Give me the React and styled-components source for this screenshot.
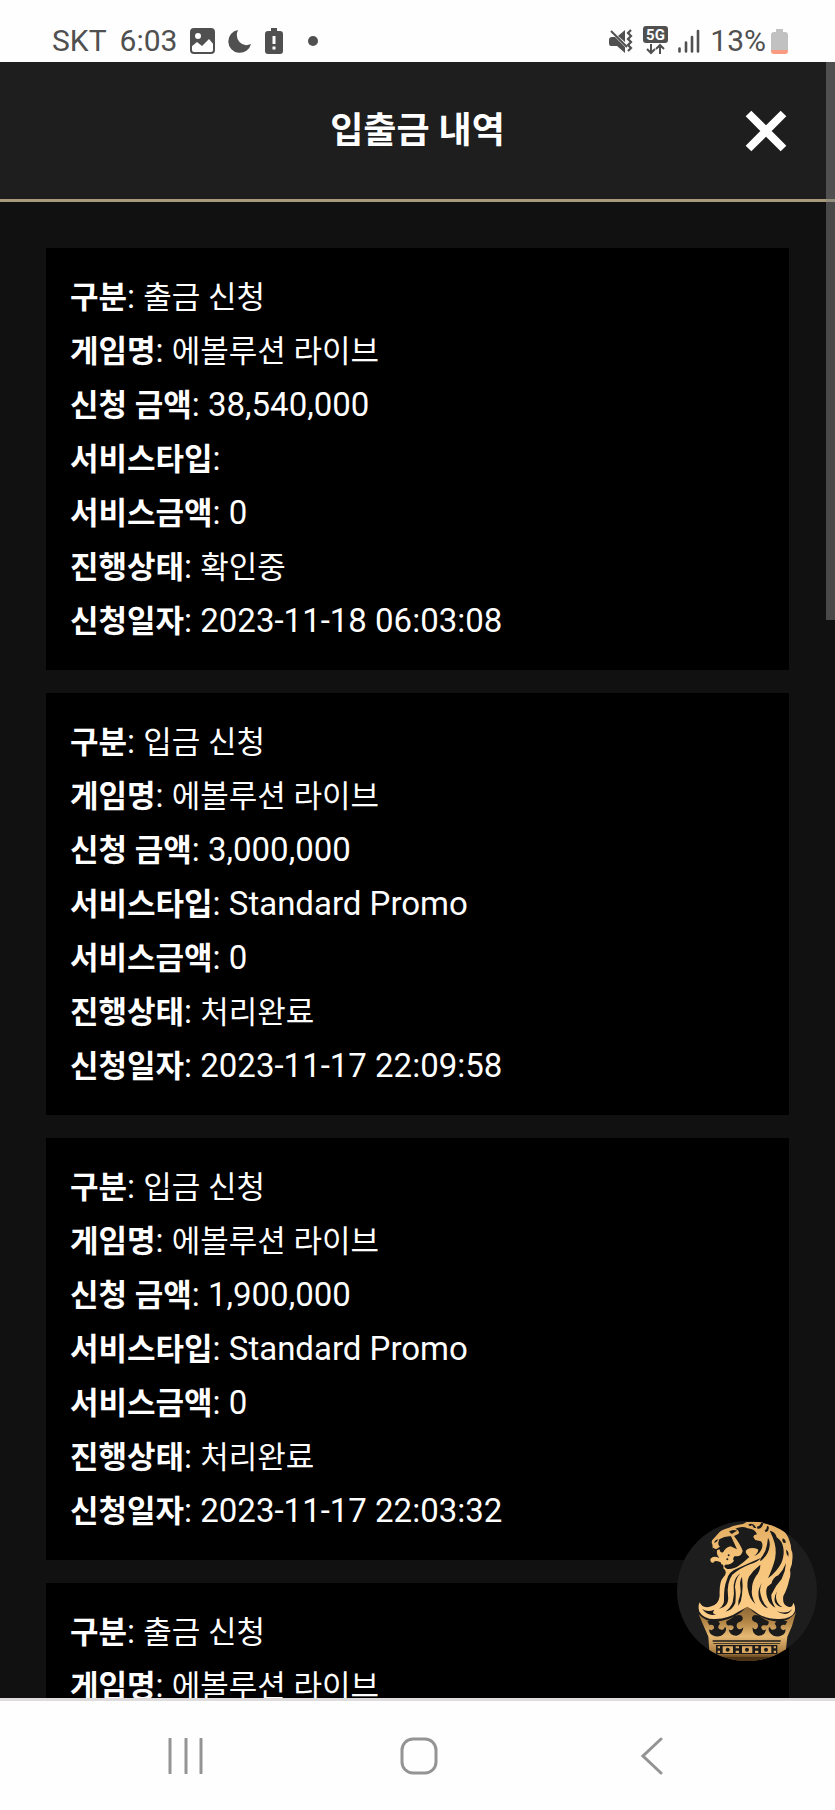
import React from 'react'
import styled, { createGlobalStyle } from 'styled-components'

const GlobalStyle = createGlobalStyle`
* {
  box-sizing: border-box;
}
body {
  margin: 0;
  background: #111;
  font-family: Roboto, "Noto Sans CJK KR", sans-serif;
}
`

const Page = styled.div`
height: 100vh;
display: flex;
flex-direction: column;
overflow: hidden;
`

const StatusBar = styled.div`
flex: none;
display: flex;
justify-content: space-between;
height: 62px;
padding: 20px 47px 0 52px;
background: #fefefe;
color: #505050;
font-size: 30px;
line-height: 42px;
`
const StatusGroup = styled.div`
display: flex;
align-items: center;
gap: ${(props) => props.$gap}px;
`
const Dot = styled.span`
width: 10px;
height: 10px;
margin-left: 12px;
border-radius: 50%;
background: #505050;
`
const Percent = styled.div`
display: flex;
align-items: center;
gap: 5px;
`

const Screen = styled.main`
flex: 1;
min-height: 0;
position: relative;
overflow: hidden;
background: #111;
color: #fff;
`
const Header = styled.header`
display: grid;
grid-template-columns: 1fr auto 1fr;
align-items: center;
height: 140px;
padding: 0 48px;
background: #1e1e1e;
border-bottom: 3px solid #a99a7c;
`
const Title = styled.h1`
grid-column: 2;
margin: 0;
font-size: 36px;
line-height: 48px;
font-weight: 700;
`
const Close = styled.button`
justify-self: end;
display: flex;
padding: 0;
border: none;
background: none;
color: #fff;
cursor: pointer;
`

const List = styled.div`
display: flex;
flex-direction: column;
gap: 23px;
padding: 46px;
`
const Card = styled.section`
padding: 22px 24px;
background: #000;
`
const Row = styled.p`
margin: 0;
height: 54px;
font-size: 33px;
line-height: 54px;
white-space: nowrap;
`
const Label = styled.strong`
font-size: 31px;
font-weight: 700;
`
const Value = styled.span`
font-size: ${(props) => (props.$korean ? '31px' : '33px')};
`

const ScrollThumb = styled.div`
position: absolute;
top: 0;
right: 0;
width: 9px;
height: 558px;
background: rgba(130, 130, 130, 0.5);
`
const Floating = styled.button`
position: absolute;
right: 18px;
bottom: 37px;
display: flex;
width: 140px;
height: 140px;
padding: 0;
border: none;
border-radius: 50%;
overflow: hidden;
background: #1d1d1d;
cursor: pointer;
`

const NavBar = styled.nav`
flex: none;
display: grid;
grid-template-columns: repeat(3, 1fr);
align-items: center;
height: 112px;
padding: 0 66px 0 69px;
background: #fefefe;
border-top: 3px solid #dedcdc;
`
const NavButton = styled.button`
display: flex;
justify-content: center;
padding: 16px 0;
border: none;
background: none;
color: #949494;
`

const records = [
    { kind: '출금 신청', game: '에볼루션 라이브', amount: '38,540,000', type: '', bonus: '0', state: '확인중', date: '2023-11-18 06:03:08' },
    { kind: '입금 신청', game: '에볼루션 라이브', amount: '3,000,000', type: 'Standard Promo', bonus: '0', state: '처리완료', date: '2023-11-17 22:09:58' },
    { kind: '입금 신청', game: '에볼루션 라이브', amount: '1,900,000', type: 'Standard Promo', bonus: '0', state: '처리완료', date: '2023-11-17 22:03:32' },
    { kind: '출금 신청', game: '에볼루션 라이브' },
]

const fields = [
    { key: 'kind', label: '구분', korean: true },
    { key: 'game', label: '게임명', korean: true },
    { key: 'amount', label: '신청 금액' },
    { key: 'type', label: '서비스타입' },
    { key: 'bonus', label: '서비스금액' },
    { key: 'state', label: '진행상태', korean: true },
    { key: 'date', label: '신청일자' },
]

const PictureIcon = () => (
    <svg width="25" height="26" viewBox="0 0 25 26">
        <rect x="1" y="1" width="23" height="24" rx="3" fill="none" stroke="#505050" strokeWidth="2" />
        <path d="M1 3Q1 1 3 1H22Q24 1 24 3V17L19 11L12 18L7 14L1 19Z" fill="#505050" />
        <circle cx="8" cy="8" r="3" fill="#fefefe" />
    </svg>
)

const MoonIcon = () => (
    <svg width="24" height="24" viewBox="0 0 24 24">
        <path d="M10 1A11.5 11.5 0 1 0 23 15Q16 18 11.500 13Q7 8 10 1Z" fill="#505050" />
    </svg>
)

const AlertBatteryIcon = () => (
    <svg width="18" height="26" viewBox="0 0 18 26">
        <path d="M6 0H12V3H15Q18 3 18 6V23Q18 26 15 26H3Q0 26 0 23V6Q0 3 3 3H6Z" fill="#505050" />
        <path d="M7.500 8H10.500V16H7.500ZM7.500 18.500H10.500V21.500H7.500Z" fill="#fefefe" />
    </svg>
)

const MuteIcon = () => (
    <svg width="24" height="24" viewBox="0 0 24 24">
        <path d="M0 11Q0 8 3 8H6L16 18V24L8 17H2Q0 17 0 14ZM9 7L16 1V13Z" fill="#505050" />
        <path d="M2 2L18 18" stroke="#505050" strokeWidth="2" />
        <path d="M22 1L19 4L22 7L19 10L22 13L19 16L22 19L19 22" fill="none" stroke="#505050" strokeWidth="2.200" />
    </svg>
)

const NetworkIcon = () => (
    <svg width="25" height="30" viewBox="0 0 25 30">
        <rect width="25" height="17" rx="3" fill="#505050" />
        <text x="12.500" y="13.500" textAnchor="middle" fontFamily="Roboto, sans-serif" fontWeight="700" fontSize="15" fill="#fefefe">5G</text>
        <path d="M8 18V27M4 23L8 27L12 23M17 28V19M13 23L17 19L21 23" fill="none" stroke="#505050" strokeWidth="2" />
    </svg>
)

const SignalIcon = () => (
    <svg width="22" height="24" viewBox="0 0 22 24">
        <path d="M1.500 19.500V22.500M8 13.500V22.500M14 8V22.500M20 2V22.500" stroke="#505050" strokeWidth="2.600" strokeLinecap="round" />
    </svg>
)

const LowBatteryIcon = () => (
    <svg width="17" height="25" viewBox="0 0 17 25">
        <path d="M5 0H12V3H14Q17 3 17 6V21H0V6Q0 3 3 3H5Z" fill="#c1c1c1" />
        <path d="M0 21H17V22Q17 25 14 25H3Q0 25 0 22Z" fill="#fa9a80" />
    </svg>
)

const LionLogo = () => (
    <svg width="140" height="140" viewBox="51 65 420 420">
        <defs>
            <linearGradient id="mane" x1="0" y1="0" x2="0" y2="1">
                <stop offset="0" stopColor="#e3ad61" />
                <stop offset=".4" stopColor="#f6c47a" />
                <stop offset="1" stopColor="#fccd88" />
            </linearGradient>
            <linearGradient id="crown" x1="0" y1="0" x2="0" y2="1">
                <stop offset="0" stopColor="#8a6534" />
                <stop offset=".3" stopColor="#b58748" />
                <stop offset=".55" stopColor="#e6b974" />
                <stop offset=".8" stopColor="#b58748" />
                <stop offset="1" stopColor="#6a4a22" />
            </linearGradient>
        </defs>

        {/* crown */}
        <path d="M116 345Q140 372 180 366Q230 358 262 320Q294 358 344 366Q384 372 408 338L396 380L382 412L374 485H150L145 412L130 378Z" fill="url(#crown)" />
        <g fill="#1b1b1b">
            <path d="M142 366Q165 360 174 364L180 373Q170 384 179 390Q191 395 195 382Q202 389 194 400Q178 418 158 408Q146 402 148 390Q156 396 162 387Q164 374 148 377Z" />
            <path d="M199 366Q214 358 224 350Q244 342 248 354Q250 366 236 369Q226 375 232 386Q240 394 250 384Q248 405 230 409Q209 410 206 390Q215 397 221 386Q222 376 208 378Q197 380 199 366Z" />
            <path d="M326 366Q309 358 300 350Q280 342 276 354Q274 366 288 369Q298 375 292 386Q284 394 278 384Q276 405 294 409Q315 410 318 390Q309 397 304 386Q302 376 316 378Q327 380 326 366Z" />
            <path d="M382 366Q359 360 350 364L344 373Q354 384 345 390Q333 395 329 382Q322 389 330 400Q346 418 366 408Q378 402 376 390Q368 396 362 387Q360 374 376 377Z" />
            <path d="M158 423H362V427H158ZM160 431H360V433H160Z" />
            <path d="M168 437H352V464H168Z" />
        </g>
        <g fill="#dca962">
            <path d="M188 441H219V461H188ZM246 441H277V461H246ZM303 441H334V461H303Z" />
            <path d="M173 441H180V447H173ZM173 454H180V461H173ZM227 441H237V447H227ZM227 454H237V461H227ZM285 441H295V447H285ZM285 454H295V461H285ZM341 441H348V447H341ZM341 454H348V461H341Z" />
        </g>
        <path d="M150 466H374V472H150Z" fill="#7e592c" />
        <path d="M150 472H374V485H150Z" fill="#4e3417" />
        <g fill="#1b1b1b">
            <circle cx="203" cy="451" r="6" />
            <circle cx="261" cy="451" r="6" />
            <circle cx="318" cy="451" r="6" />
        </g>

        {/* lion head and mane */}
        <path d="M119 309Q113 322 118 337Q132 360 165 359Q207 357 235 337Q252 328 262 322Q282 334 295 344Q323 360 358 359Q396 357 404 337Q408 321 400 310Q397 326 385 322Q366 319 370 290Q382 270 388 240Q393 228 390 211Q400 190 397 160Q392 148 393 140Q385 106 370 94Q350 75 322 68H260Q250 76 236 76Q217 79 207 85Q181 92 176 101L160 119Q152 125 157 135L159 151Q164 161 171 151Q168 166 178 176Q160 167 151 179Q151 192 160 190Q163 181 182 189L184 195Q192 194 190 207Q205 218 190 234Q177 248 179 290Q176 315 154 321Q128 330 119 309Z" fill="url(#mane)" />
        <g fill="#1b1b1b">
            <path d="M226 88Q246 79 263 87Q286 89 291 105Q272 108 286 122L303 126Q312 137 303 153Q296 166 283 170Q297 158 294 150Q277 143 263 149Q249 157 268 173Q251 189 238 198Q221 211 202 209Q189 203 195 196Q214 197 222 184Q216 180 224 170Q244 174 248 155Q242 136 222 110L236 103Q240 94 226 88Z" />
            <path d="M159 145L168 150L180 142Q171 137 178 120Q196 109 213 111L220 126L231 150L212 141Q196 145 190 158Q182 164 178 150L171 153L168 160L159 153Z" />
            <path d="M207 97Q216 89 232 94Q222 98 216 104ZM163 128Q166 120 175 120Q173 126 164 131Z" />
            <path d="M265 76Q271 70 282 76L289 86H282L276 77Q270 84 265 76ZM291 82Q302 79 305 69L310 72Q305 91 292 88ZM322 79Q330 82 324 94Q316 101 314 94Q320 91 322 79Z" />
            <path d="M329 94Q346 96 350 114Q366 124 370 146Q374 168 364 191Q350 218 324 237Q336 209 341 193Q352 163 344 132Q339 112 329 94Z" />
            <path d="M368 117Q377 120 377 130Q370 133 367 124ZM378 151Q388 155 385 172Q378 164 378 151Z" />
            <path d="M324 115Q332 128 328 145Q326 160 311 177Q297 193 302 177Q318 158 321 136Z" />
            <path d="M302 176Q270 190 235 206Q205 216 200 243Q192 262 192 296Q194 319 177 328Q209 320 204 289Q200 250 217 226Q241 206 270 195Q294 188 302 176Z" />
            <path d="M241 222Q224 233 221 258Q224 285 218 309Q211 327 196 337Q218 332 226 311Q229 282 225 263Q227 237 241 222Z" />
            <path d="M246 232Q238 246 241 262Q244 277 239 292Q233 304 235 320Q245 305 246 287Q250 261 246 232Z" />
            <path d="M301 196Q279 213 267 232Q259 250 264 272Q268 298 286 314Q272 286 276 269Q275 252 288 230Q301 215 301 196Z" />
            <path d="M378 191Q370 213 355 228Q338 235 335 252L322 262Q316 274 321 293Q328 316 346 325Q333 304 334 286Q346 259 365 239Q377 215 378 191Z" />
            <path d="M306 250Q296 267 303 289Q309 314 324 327Q308 322 299 303Q289 275 306 250ZM352 276Q346 287 349 300Q352 315 368 324Q352 322 345 309Q340 292 352 276Z" />
            <path d="M126 329Q144 340 163 331Q153 346 169 344Q148 354 126 329ZM350 335Q380 347 397 329Q381 356 350 335Z" />
            <circle cx="206" cy="168" r="3" />
            <circle cx="202" cy="180" r="3" />
        </g>
    </svg>
)

export const App = () => {
    return (
        <Page>
            <GlobalStyle />

            <StatusBar>
                <StatusGroup $gap={13}>
                    <span>SKT</span>
                    <span>6:03</span>
                    <PictureIcon />
                    <MoonIcon />
                    <AlertBatteryIcon />
                    <Dot />
                </StatusGroup>
                <StatusGroup $gap={10}>
                    <MuteIcon />
                    <NetworkIcon />
                    <SignalIcon />
                    <Percent>
                        <span>13%</span>
                        <LowBatteryIcon />
                    </Percent>
                </StatusGroup>
            </StatusBar>

            <Screen>
                <Header>
                    <Title>입출금 내역</Title>
                    <Close aria-label="닫기">
                        <svg width="42" height="42" viewBox="0 0 42 42">
                            <path d="M3.500 3.500L38.500 38.500M38.500 3.500L3.500 38.500" stroke="currentColor" strokeWidth="8" />
                        </svg>
                    </Close>
                </Header>

                <List>
                    {records.map((record, i) => (
                        <Card key={i}>
                            {fields.filter((f) => f.key in record).map((f) => (
                                <Row key={f.key}>
                                    <Label>{f.label}</Label>: <Value $korean={f.korean}>{record[f.key]}</Value>
                                </Row>
                            ))}
                        </Card>
                    ))}
                </List>

                <ScrollThumb />
                <Floating aria-label="홈">
                    <LionLogo />
                </Floating>
            </Screen>

            <NavBar>
                <NavButton aria-label="최근 앱">
                    <svg width="36" height="36" viewBox="0 0 36 36">
                        <path d="M2 1V35M18 1V35M33 1V35" stroke="currentColor" strokeWidth="3" strokeLinecap="round" />
                    </svg>
                </NavButton>
                <NavButton aria-label="홈 화면">
                    <svg width="38" height="38" viewBox="0 0 38 38">
                        <rect x="2" y="2" width="34" height="34" rx="11" fill="none" stroke="currentColor" strokeWidth="3" />
                    </svg>
                </NavButton>
                <NavButton aria-label="뒤로">
                    <svg width="22" height="38" viewBox="0 0 22 38">
                        <path d="M20 2L2 19L20 36" fill="none" stroke="currentColor" strokeWidth="3" strokeLinecap="round" />
                    </svg>
                </NavButton>
            </NavBar>
        </Page>
    )
}

export default App
